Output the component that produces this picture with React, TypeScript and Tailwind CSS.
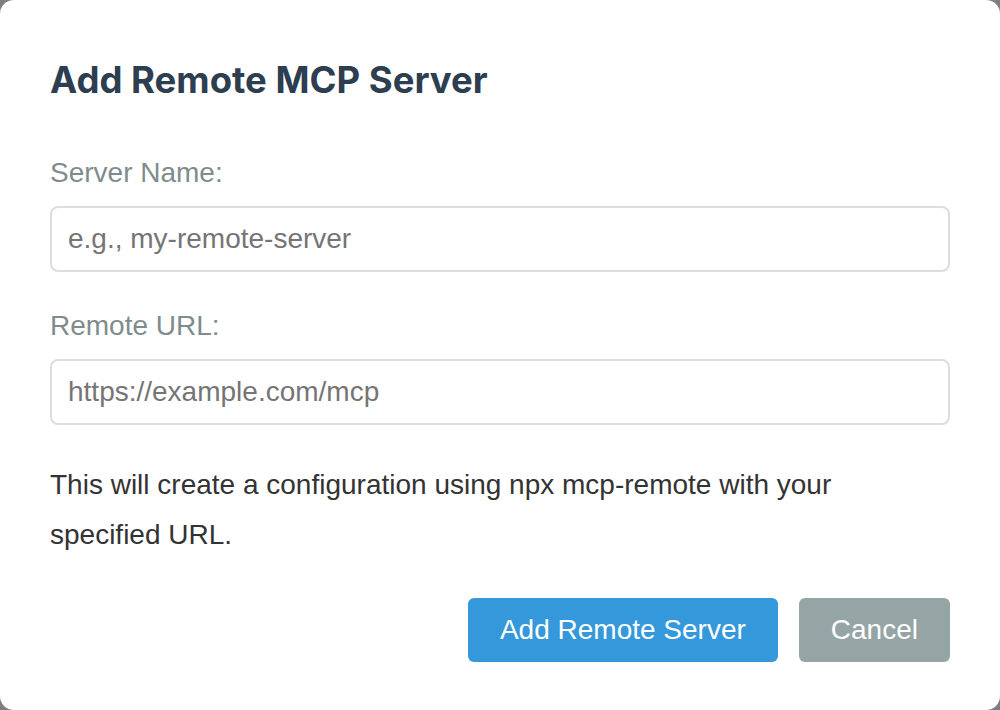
import React from "react";

const Field = ({ label, placeholder }: { label: string; placeholder: string }) => (
  <div className="flex flex-col">
    <label className="text-[28px] leading-[32px] text-[#7f8c8d]">{label}</label>
    <input
      className="mt-[17px] h-[66px] w-full rounded-[8px] border-2 border-[#dddddd] px-[16px] text-[28px] text-[#333] outline-none placeholder:text-[#757575]"
      placeholder={placeholder}
    />
  </div>
);

export default function App() {
  return (
    <div className="h-[710px] w-[1000px] bg-[#7f7f7f] font-['Liberation_Sans',Arial,sans-serif]">
      <div className="flex h-full w-full flex-col rounded-[14px] bg-white px-[50px] pt-[58px]">
        {/* Header */}
        <h2 className="font-['Inter',sans-serif] text-[36.5px] font-bold leading-[44px] text-[#2c3e50]">
          Add Remote MCP Server
        </h2>

        {/* Form */}
        <div className="mt-[55px] flex flex-col gap-[38px]">
          <Field label="Server Name:" placeholder="e.g., my-remote-server" />
          <Field label="Remote URL:" placeholder="https://example.com/mcp" />
        </div>

        <p className="mt-[35px] max-w-[880px] text-[28px] leading-[50px] text-[#333]">
          This will create a configuration using npx mcp-remote with your specified URL.
        </p>

        {/* Actions */}
        <div className="mt-[38px] flex justify-end gap-[21px]">
          <button className="h-[64px] rounded-[6px] bg-[#3498db] px-[32px] text-[28px] text-white">
            Add Remote Server
          </button>
          <button className="h-[64px] rounded-[6px] bg-[#95a5a6] px-[32px] text-[28px] text-white">
            Cancel
          </button>
        </div>
      </div>
    </div>
  );
}
